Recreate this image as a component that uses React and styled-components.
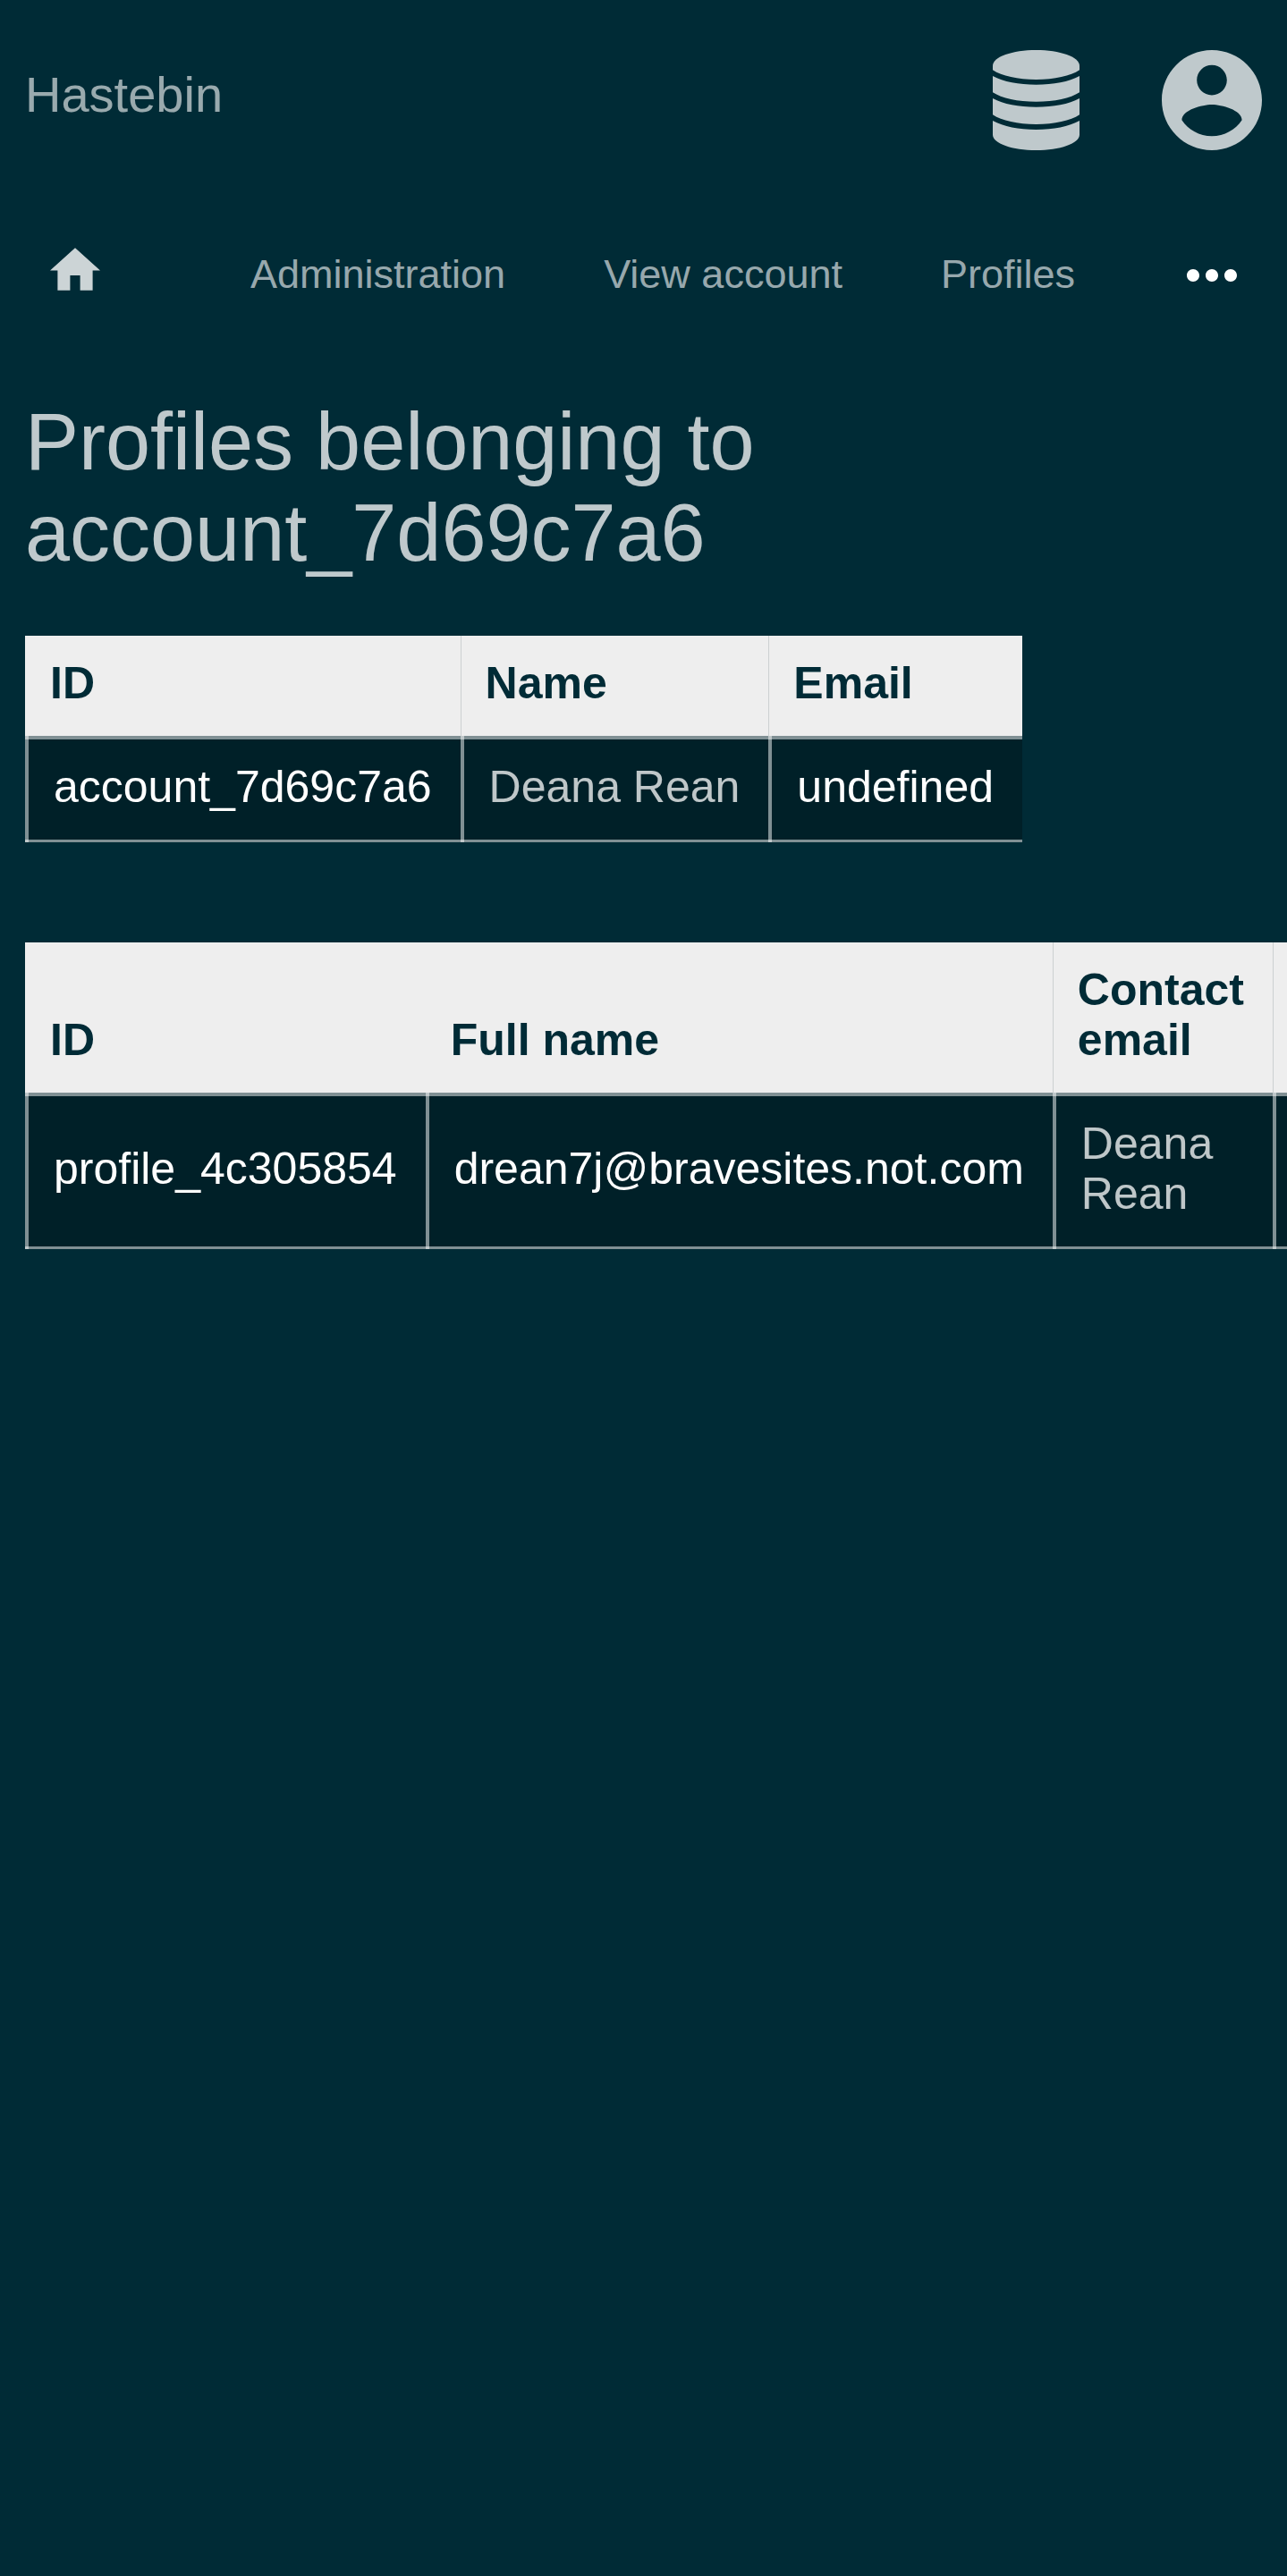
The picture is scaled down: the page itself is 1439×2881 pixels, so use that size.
import React from 'react';
import styled, { createGlobalStyle } from 'styled-components';

const GlobalStyle = createGlobalStyle`
  * { box-sizing: border-box; }
  body {
    margin: 0;
    min-height: 100vh;
    background: #002b36;
    color: #fff;
    font-family: "Liberation Sans", Arial, sans-serif;
  }
`;

const Header = styled.header`
  display: flex;
  align-items: center;
  justify-content: space-between;
  padding: 56px 28px;
`;

const Brand = styled.a`
  font-size: 56px;
  line-height: 64px;
  padding-bottom: 12px;
  color: rgba(255, 255, 255, 0.6);
  text-decoration: none;
`;

const HeaderLinks = styled.div`
  display: flex;
  gap: 92px;
`;

const IconLink = styled.a`
  display: block;
  color: rgba(255, 255, 255, ${(p) => p.$strength});

  svg {
    display: block;
    fill: currentColor;
  }
`;

const Nav = styled.nav`
  display: flex;
  align-items: center;
  padding: 0 56px;
  height: 168px;
`;

const HomeItem = styled.div`
  padding-bottom: 14px;
  margin-right: 168px;
`;

const Menu = styled.ul`
  display: flex;
  gap: 110px;
  margin: 0;
  padding: 0 0 2px;
  list-style: none;
`;

const MenuLink = styled.a`
  display: block;
  font-size: 45px;
  line-height: 52px;
  color: rgba(255, 255, 255, 0.6);
  text-decoration: none;
  white-space: nowrap;
`;

const MoreButton = styled.button`
  margin: 0 0 0 auto;
  padding: 0;
  border: 0;
  background: none;
  color: #fff;

  svg {
    display: block;
    fill: currentColor;
  }
`;

const Main = styled.main`
  display: flex;
  flex-direction: column;
  padding: 51px 0 56px 28px;
`;

const Title = styled.h1`
  margin: 0 28px 64px 0;
  font-size: 90px;
  line-height: 102px;
  font-weight: 400;
  color: rgba(255, 255, 255, 0.75);
`;

const TableScroller = styled.div`
  overflow-x: auto;
  scrollbar-width: none;
  margin-bottom: 112px;
`;

const Table = styled.table`
  width: ${(p) => (p.$compact ? 'min-content' : 'auto')};
  border-collapse: separate;
  border-spacing: 0;
  font-size: 50px;
  line-height: 56px;
  text-align: left;
`;

const HeadCell = styled.th`
  padding: 25px 32px 31px 28px;
  background: #eee;
  color: #002b36;
  font-weight: 700;
  vertical-align: bottom;
  box-shadow: ${(p) => (p.$divided ? 'inset 1px 0 #ccd0d1' : 'none')};
`;

/* Translucent rules are layered so that they brighten where they cross. */
const Cell = styled.td`
  --rule: linear-gradient(rgba(255, 255, 255, 0.5), rgba(255, 255, 255, 0.5));
  padding: 29px 32px 34px;
  background:
    var(--rule) 0 0 / 4px 100% no-repeat,
    var(--rule) 0 0 / 100% 4px no-repeat,
    var(--rule) 0 100% / 100% 3px no-repeat,
    rgba(0, 0, 0, 0.25);
  vertical-align: middle;
`;

const CellLink = styled.a`
  color: rgba(255, 255, 255, 0.75);
  text-decoration: none;
`;

function DatabaseIcon() {
  return (
    <svg width="97" height="112" viewBox="0 0 97 112" aria-hidden="true">
      <path d="M48.500 0C22 0 0 7.500 0 17.500V22.300C10 29 28 33 48.500 33S87 29 97 22.300V17.500C97 7.500 75 0 48.500 0z" />
      <path d="M0 29C12 35.500 29 38.700 48.500 38.700S85 35.500 97 29V47.300C87 54 69 57.700 48.500 57.700S10 54 0 47.300z" />
      <path d="M0 54C12 60.500 29 63.700 48.500 63.700S85 60.500 97 54V72.300C87 79 69 83 48.500 83S10 79 0 72.300z" />
      <path d="M0 79C12 85.500 29 89 48.500 89S85 85.500 97 79V94.700C97 104.500 75 112 48.500 112S0 104.500 0 94.700z" />
    </svg>
  );
}

function AccountIcon() {
  return (
    <svg width="112" height="112" viewBox="2 2 20 20" aria-hidden="true">
      <path d="M12 2C6.48 2 2 6.48 2 12s4.48 10 10 10 10-4.48 10-10S17.52 2 12 2zm0 3c1.66 0 3 1.34 3 3s-1.34 3-3 3-3-1.34-3-3 1.34-3 3-3zm0 14.2c-2.5 0-4.71-1.28-6-3.22.03-1.99 4-3.08 6-3.08 1.99 0 5.97 1.09 6 3.08-1.29 1.94-3.5 3.22-6 3.22z" />
    </svg>
  );
}

function HomeIcon() {
  return (
    <svg width="56" height="48" viewBox="2 3 20 17" aria-hidden="true">
      <path d="M10 20v-6h4v6h5v-8h3L12 3 2 12h3v8z" />
    </svg>
  );
}

function MoreIcon() {
  return (
    <svg width="56" height="14" viewBox="4 10 16 4" aria-hidden="true">
      <path d="M6 10c-1.1 0-2 .9-2 2s.9 2 2 2 2-.9 2-2-.9-2-2-2zm12 0c-1.1 0-2 .9-2 2s.9 2 2 2 2-.9 2-2-.9-2-2-2zm-6 0c-1.1 0-2 .9-2 2s.9 2 2 2 2-.9 2-2-.9-2-2-2z" />
    </svg>
  );
}

const menuItems = ['Administration', 'View account', 'Profiles'];

export default function App() {
  return (
    <>
      <GlobalStyle />
      <Header>
        <Brand href="#">Hastebin</Brand>
        <HeaderLinks>
          <IconLink href="#" $strength={0.75}><DatabaseIcon /></IconLink>
          <IconLink href="#" $strength={0.75}><AccountIcon /></IconLink>
        </HeaderLinks>
      </Header>
      <Nav>
        <HomeItem>
          <IconLink href="#" $strength={0.8}><HomeIcon /></IconLink>
        </HomeItem>
        <Menu>
          {menuItems.map((item) => (
            <li key={item}><MenuLink href="#">{item}</MenuLink></li>
          ))}
        </Menu>
        <MoreButton type="button"><MoreIcon /></MoreButton>
      </Nav>
      <Main>
        <Title>Profiles belonging to account_7d69c7a6</Title>
        <TableScroller>
          <Table>
            <thead>
              <tr>
                <HeadCell>ID</HeadCell>
                <HeadCell $divided>Name</HeadCell>
                <HeadCell $divided>Email</HeadCell>
              </tr>
            </thead>
            <tbody>
              <tr>
                <Cell>account_7d69c7a6</Cell>
                <Cell><CellLink href="#">Deana Rean</CellLink></Cell>
                <Cell>undefined</Cell>
              </tr>
            </tbody>
          </Table>
        </TableScroller>
        <TableScroller>
          <Table $compact>
            <thead>
              <tr>
                <HeadCell>ID</HeadCell>
                <HeadCell>Full name</HeadCell>
                <HeadCell $divided>Contact email</HeadCell>
                <HeadCell $divided />
              </tr>
            </thead>
            <tbody>
              <tr>
                <Cell>profile_4c305854</Cell>
                <Cell>drean7j@bravesites.not.com</Cell>
                <Cell><CellLink href="#">Deana Rean</CellLink></Cell>
                <Cell />
              </tr>
            </tbody>
          </Table>
        </TableScroller>
      </Main>
    </>
  );
}
